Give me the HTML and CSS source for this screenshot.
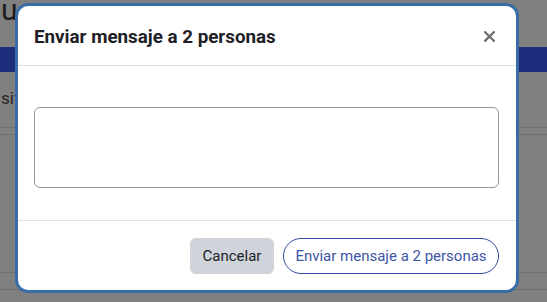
FILE: index.html
```html
<!DOCTYPE html>
<html lang="es">
<head>
<meta charset="utf-8">
<title>Enviar mensaje</title>
<link rel="stylesheet" href="styles.css">
</head>
<body>
<div class="page">
  <div class="page-title">u</div>
  <div class="band"></div>
  <div class="page-row">siti</div>
  <div class="rule rule-a"></div>
  <div class="rule rule-b"></div>
  <div class="spacer"></div>
  <div class="rule rule-c"></div>
  <div class="rule rule-d"></div>
</div>

<div class="modal" role="dialog" aria-labelledby="modal-title">
  <div class="modal-header">
    <h5 class="modal-title" id="modal-title">Enviar mensaje a 2 personas</h5>
    <button class="close" aria-label="Cerrar">
      <svg width="11" height="11" viewBox="0 0 11 11"><path d="M1.2 1.2 L9.8 9.8 M9.8 1.2 L1.2 9.8" stroke="#707070" stroke-width="2.3" stroke-linecap="square"/></svg>
    </button>
  </div>
  <div class="modal-body">
    <textarea class="message" aria-label="Mensaje"></textarea>
  </div>
  <div class="modal-footer">
    <button class="btn btn-secondary">Cancelar</button>
    <button class="btn btn-outline">Enviar mensaje a 2 personas</button>
  </div>
</div>
</body>
</html>
```

FILE: styles.css
```css
html, body {
  margin: 0;
  padding: 0;
}
body {
  width: 547px;
  height: 302px;
  overflow: hidden;
  background: #808080;
  font-family: Roboto, "Liberation Sans", sans-serif;
  position: relative;
}
.page {
  display: flex;
  flex-direction: column;
}
.page-title {
  font-size: 30px;
  line-height: 20px;
  height: 47px;
  color: #1c1c1c;
  padding-left: 1px;
}
.band {
  height: 25px;
  background: #1e2d7b;
}
.page-row {
  font-size: 17px;
  line-height: 20px;
  padding-top: 16px;
  height: 20px;
  color: #262626;
  padding-left: 1px;
}
.rule {
  height: 1px;
  background: #6f6f6f;
}
.rule-a { margin-top: 19px; }
.rule-b { margin-top: 6px; }
.spacer { height: 137px; }
.rule-d { margin-top: 16px; }

.modal {
  position: absolute;
  left: 15px;
  top: 3px;
  width: 504px;
  height: 290px;
  box-sizing: border-box;
  border: 3px solid #3a6da6;
  border-radius: 13px;
  background: #fff;
  display: flex;
  flex-direction: column;
  overflow: hidden;
}
.modal-header {
  height: 60px;
  flex: none;
  box-sizing: border-box;
  border-bottom: 1px solid #dee2e6;
  display: flex;
  align-items: center;
  justify-content: space-between;
  padding: 0 21px 0 16px;
}
.modal-title {
  margin: 0;
  font-size: 18.8px;
  font-weight: 700;
  color: #1d2125;
  line-height: 22px;
  padding-top: 3px;
}
.close {
  border: 0;
  background: none;
  padding: 0;
  width: 11px;
  height: 11px;
  display: flex;
  margin-top: 2px;
}
.modal-body {
  flex: none;
  padding: 41px 17px 32px 16px;
  height: 155px;
  box-sizing: border-box;
  border-bottom: 1px solid #dee2e6;
}
.message {
  display: block;
  width: 100%;
  height: 81px;
  box-sizing: border-box;
  border: 1px solid #8f959e;
  border-radius: 6px;
  resize: none;
  margin: 0;
  font-family: inherit;
}
.modal-footer {
  flex: 1;
  display: flex;
  justify-content: flex-end;
  align-items: center;
  gap: 9px;
  padding: 0 17px 0 16px;
}
.btn {
  height: 36px;
  box-sizing: border-box;
  font-family: inherit;
  font-size: 15px;
  padding: 0;
  margin: 0;
  white-space: nowrap;
  flex: none;
}
.btn-secondary {
  width: 84px;
  background: #ced4da;
  color: #1d2125;
  border: 1px solid #ced4da;
  border-radius: 6px;
}
.btn-outline {
  width: 216px;
  background: #fff;
  color: #3d55a8;
  border: 1px solid #2f4aa0;
  border-radius: 18px;
}
```
